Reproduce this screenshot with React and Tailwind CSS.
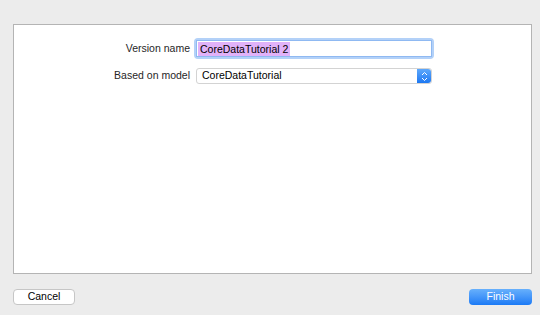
import React from "react";

const Stepper = () => (
  <div className="flex h-full w-[14px] flex-col items-center justify-center rounded-r-[3px] bg-gradient-to-b from-[#5ea8fb] to-[#1b78f2]">
    <svg width="7" height="11" viewBox="0 0 7 11" fill="none">
      <path d="M1 4 L3.5 1.5 L6 4" stroke="white" strokeWidth="1" />
      <path d="M1 7 L3.5 9.5 L6 7" stroke="white" strokeWidth="1" />
    </svg>
  </div>
);

export default function App() {
  return (
    <div
      className="flex h-[315px] w-[540px] flex-col bg-[#ececec] text-[10.5px] text-[#262626]"
      style={{ fontFamily: '"Liberation Sans", Arial, sans-serif' }}
    >
      <div className="ml-[13px] mt-[24px] h-[250px] w-[519px] border border-[#b4b4b4] bg-white pt-[13px]">
        <div className="flex h-[21px] items-center">
          <div className="w-[176px] text-right">Version name</div>
          <div className="ml-[4px] h-[21px] w-[240px] rounded-[4px] bg-[#b3d1f8] p-[2px]">
            <div className="flex h-full items-center border border-[#8fb9f2] bg-white">
              <span className="ml-[1px] bg-[#e1b2f9] px-[2px] leading-[14px] text-black">
                CoreDataTutorial 2
              </span>
            </div>
          </div>
        </div>
        <div className="mt-[9px] flex h-[16px] items-center">
          <div className="w-[176px] text-right">Based on model</div>
          <div className="ml-[6px] flex h-[16px] w-[236px] items-center rounded-[3px] border border-[#d3d3d3] bg-white">
            <span className="flex-1 pl-[5px] text-black">CoreDataTutorial</span>
            <Stepper />
          </div>
        </div>
      </div>
      <div className="mt-[15px] flex justify-between pl-[13px] pr-[8px]">
        <button className="flex h-[16px] w-[62px] items-center justify-center rounded-[4px] border border-[#c6c6c6] bg-white text-[10.5px] text-black">
          Cancel
        </button>
        <button className="flex h-[16px] w-[63px] items-center justify-center rounded-[4px] bg-gradient-to-b from-[#67b0fc] to-[#1a7af5] text-[10.5px] text-white">
          Finish
        </button>
      </div>
    </div>
  );
}
